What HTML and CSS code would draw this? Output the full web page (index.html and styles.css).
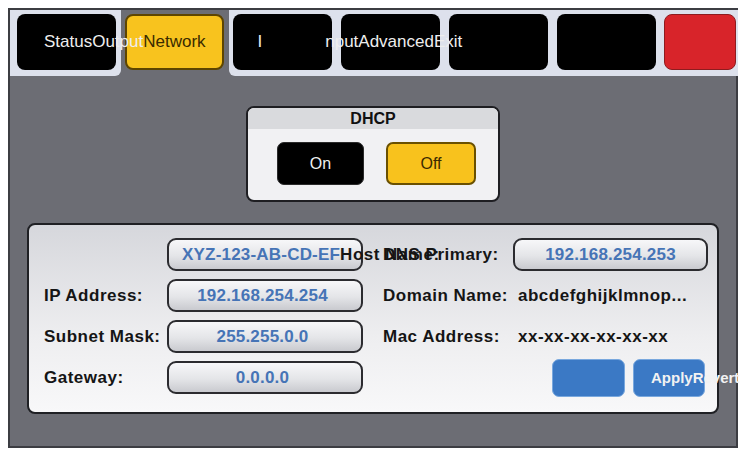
FILE: index.html
```html
<!DOCTYPE html>
<html>
<head>
<meta charset="utf-8">
<link rel="stylesheet" href="styles.css">
</head>
<body>
<div class="frame">
  <nav class="tabs">
    <div class="cell first before-sel"><div class="tab black pad1"><span class="tlabel"><span class="w">StatusOutput</span><span class="dk">Network</span></span></div></div>
    <div class="cell sel"><div class="tab yellow"></div></div>
    <div class="cell after-sel"><div class="tab black pad3"><span class="tlabel"><span class="w">I</span><span class="w gap">nputAdvancedExit</span></span></div></div>
    <div class="cell"><div class="tab black"></div></div>
    <div class="cell"><div class="tab black"></div></div>
    <div class="cell"><div class="tab black"></div></div>
    <div class="cell last"><div class="tab red"></div></div>
  </nav>
  <main class="panel">
    <section class="dhcp">
      <header class="dhcp-head">DHCP</header>
      <div class="dhcp-body">
        <button class="btn on">On</button>
        <button class="btn off">Off</button>
      </div>
    </section>
    <section class="net">
      <div class="grid left">
        <div class="label"></div>
        <div class="field host"><span class="val">XYZ-123-AB-CD-EF</span><span class="over">Host Name:</span></div>
        <div class="label">IP Address:</div>
        <div class="field"><span class="val">192.168.254.254</span></div>
        <div class="label">Subnet Mask:</div>
        <div class="field"><span class="val">255.255.0.0</span></div>
        <div class="label">Gateway:</div>
        <div class="field"><span class="val">0.0.0.0</span></div>
      </div>
      <div class="grid right">
        <div class="label">DNS Primary:</div>
        <div class="field dns"><span class="val">192.168.254.253</span></div>
        <div class="label">Domain Name:</div>
        <div class="value">abcdefghijklmnop...</div>
        <div class="label">Mac Address:</div>
        <div class="value">xx-xx-xx-xx-xx-xx</div>
        <div class="actions">
          <button class="blue"></button>
          <button class="blue txt"><span class="over-w">ApplyRevert</span></button>
        </div>
      </div>
    </section>
  </main>
</div>
</body>
</html>
```
FILE: styles.css
```css
* { box-sizing: border-box; }
html, body { margin: 0; padding: 0; background: #ffffff; }
body { padding: 8px; font-family: "Liberation Sans", Arial, sans-serif; }

.frame {
  width: 730px;
  height: 440px;
  border: 2px solid #3c3d42;
  background: #6c6d74;
  display: flex;
  flex-direction: column;
}

/* ---------- tabs ---------- */
.tabs {
  display: flex;
  height: 66px;
  background: #6c6d74;
  flex: none;
}
.cell {
  background: #dde1ec;
  padding: 4px 4.5px 6px;
  display: flex;
}
.cell.first { padding-left: 7px; }
.cell.sel { background: transparent; }
.cell.before-sel { border-bottom-right-radius: 6px; }
.cell.after-sel { border-bottom-left-radius: 6px; }
.cell.last { flex: 1; padding-left: 3px; padding-right: 2px; }

.tab {
  width: 99px;
  height: 56px;
  border-radius: 8px;
  display: flex;
  align-items: center;
  white-space: nowrap;
  font-size: 17px;
}
.tab.black { background: #000; }
.tab.yellow { background: #f8c31e; border: 2px solid #5e4500; }
.tab.red { width: 72px; background: #d8242a; border: 1px solid #8e1c1f; }
.tab.pad1 { padding-left: 27px; }
.tab.pad3 { padding-left: 24.5px; }
.tlabel { position: relative; z-index: 2; }
.w { color: #eeeeee; }
.dk { color: #3a2b00; }
.gap { margin-left: 63px; }

/* ---------- panel ---------- */
.panel {
  flex: 1;
  padding-top: 30px;
  display: flex;
  flex-direction: column;
}

.dhcp {
  width: 254px;
  height: 96px;
  margin: 0 auto;
  border: 2px solid #1e1e22;
  border-radius: 8px;
  background: #f1f1f3;
  overflow: hidden;
  display: flex;
  flex-direction: column;
}
.dhcp-head {
  height: 21px;
  background: #d9dadd;
  text-align: center;
  font-weight: bold;
  font-size: 16px;
  line-height: 21px;
  color: #111;
}
.dhcp-body {
  display: flex;
  gap: 22px;
  padding: 13px 0 0 29px;
}
.btn {
  height: 43px;
  font-family: "Liberation Sans", Arial, sans-serif;
  font-size: 16px;
  border-radius: 7px;
  padding: 0;
}
.btn.on { width: 87px; background: #000; color: #f0f0f0; border: 1px solid #2a2a2a; }
.btn.off { width: 90px; background: #f8c21d; color: #3c2a00; border: 2px solid #6a5000; }

.net {
  margin: 21px 17px 0;
  height: 191px;
  border: 2px solid #1f2024;
  border-radius: 8px;
  background: linear-gradient(#d6d7dc, #eeeef0 60%, #f8f8f9);
  display: flex;
  gap: 20px;
  padding: 13px 0 0 15px;
}
.grid {
  display: grid;
  grid-template-rows: repeat(4, 33px);
  row-gap: 8px;
  align-items: center;
}
.grid.left { grid-template-columns: 123px 196px; }
.grid.right { grid-template-columns: 130px 195px; }

.label {
  font-weight: bold;
  font-size: 17px;
  letter-spacing: 0.5px;
  color: #151515;
  white-space: nowrap;
}
.field {
  height: 33px;
  border: 2px solid #2b2b2f;
  border-radius: 9px;
  background: linear-gradient(#f7f7f9, #e4e5e8 55%, #c9cacf);
  display: flex;
  align-items: center;
  justify-content: center;
  padding-right: 5px;
  white-space: nowrap;
}
.field.dns { padding-right: 0; }
.field.host { justify-content: flex-start; padding-left: 13px; }
.val {
  font-weight: bold;
  font-size: 17px;
  letter-spacing: 0.2px;
  color: #4674b6;
}
.over {
  position: relative;
  z-index: 2;
  font-weight: bold;
  font-size: 17px;
  letter-spacing: 0.5px;
  color: #151515;
}
.value {
  font-weight: bold;
  font-size: 17px;
  letter-spacing: 0.5px;
  color: #151515;
  padding-left: 5px;
  white-space: nowrap;
}
.actions {
  grid-column: 1 / span 2;
  justify-self: end;
  align-self: center;
  display: flex;
  gap: 8px;
  margin-right: 3px;
}
.blue {
  width: 73px;
  height: 38px;
  background: #3b79c5;
  border: 1px solid #79a8de;
  border-radius: 7px;
  padding: 0;
  text-align: left;
  white-space: nowrap;
}
.blue.txt { width: 72px; padding-left: 17px; }
.over-w {
  position: relative;
  z-index: 2;
  font-family: "Liberation Sans", Arial, sans-serif;
  font-weight: bold;
  font-size: 15px;
  color: #f2f2f2;
}
```
